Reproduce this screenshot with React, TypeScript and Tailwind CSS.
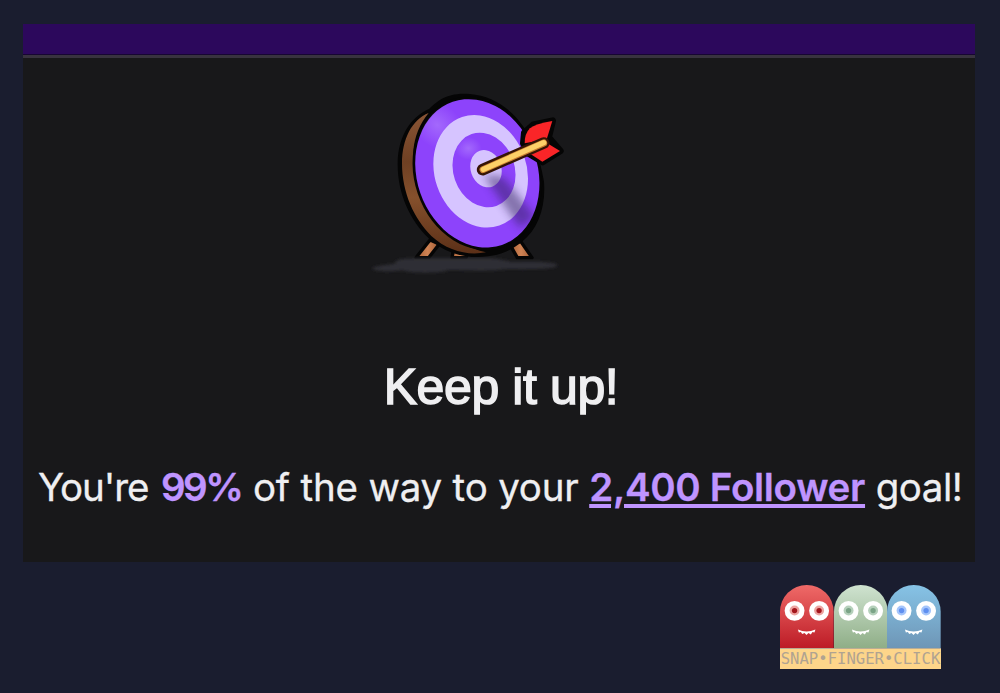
const FACES = [
  { id: "snap", from: "#ef6a68", to: "#bd1c26", iris: "#eda3a0", pupil: "#a3161d" },
  { id: "finger", from: "#cfe3d0", to: "#8fae87", iris: "#b5d0bb", pupil: "#7ba487" },
  { id: "click", from: "#86c3e6", to: "#6e96b6", iris: "#a4c5fb", pupil: "#5f8ff0" },
];

function TargetArt() {
  return (
    <svg viewBox="0 0 660 600" className="block h-[200px] w-[220px]" aria-hidden="true">
      <defs>
        <linearGradient id="wood" x1="0" y1="0" x2="0" y2="1">
          <stop offset="0" stopColor="#8a5535" />
          <stop offset="0.35" stopColor="#6f4023" />
          <stop offset="0.6" stopColor="#85502c" />
          <stop offset="1" stopColor="#5c3018" />
        </linearGradient>
        <linearGradient id="leg" x1="0" y1="0" x2="1" y2="0">
          <stop offset="0" stopColor="#a85f35" />
          <stop offset="0.5" stopColor="#cf8354" />
          <stop offset="1" stopColor="#a05a33" />
        </linearGradient>
        <radialGradient id="shine">
          <stop offset="0" stopColor="#c4a0ff" stopOpacity="0.4" />
          <stop offset="1" stopColor="#c4a0ff" stopOpacity="0" />
        </radialGradient>
        <filter id="soft" x="-30%" y="-30%" width="160%" height="160%">
          <feGaussianBlur stdDeviation="12" />
        </filter>
        <filter id="edge">
          <feGaussianBlur stdDeviation="4" />
        </filter>
        <clipPath id="disc">
          <ellipse cx="352" cy="280" rx="182" ry="228" transform="rotate(-19 352 280)" />
        </clipPath>
      </defs>

      {/* stand */}
      <g stroke="#050505" strokeWidth="10" strokeLinejoin="round">
        <path d="M210 480 L238 492 L206 533 L168 533 Z" fill="url(#leg)" />
        <path d="M280 512 L322 522 L318 533 L276 533 Z" fill="url(#leg)" />
        <path d="M450 494 L482 484 L516 533 L472 533 Z" fill="url(#leg)" />
      </g>
      <path
        d="M36 564 C60 554 90 556 108 549 C100 536 150 534 210 535 L390 535 C425 536 430 546 480 545 C530 544 590 547 592 556 C590 568 520 568 440 567 C380 576 320 570 265 570 C240 581 150 580 128 571 C90 576 40 574 36 564 Z"
        fill="#2f2e34"
        filter="url(#edge)"
      />

      {/* wooden side */}
      <path
        d="M330 42 C260 36 230 65 208 86 C150 112 114 170 113 250 C112 340 150 420 205 474 C252 520 320 538 385 529 C430 523 462 505 485 486 C535 448 558 380 552 305 C542 235 510 165 484 132 C445 78 390 47 330 42 Z"
        fill="#050505"
      />
      <path
        d="M206 99 C156 118 126 178 126 250 C126 338 162 416 214 468 C262 512 322 528 378 517 C330 506 270 480 228 432 C180 374 156 290 160 215 C163 170 180 130 206 99 Z"
        fill="url(#wood)"
      />

      {/* rings */}
      <ellipse cx="352" cy="280" rx="189" ry="235" fill="#050505" transform="rotate(-19 352 280)" />
      <ellipse cx="352" cy="280" rx="181" ry="227" fill="#8d43fb" transform="rotate(-19 352 280)" />
      <g clipPath="url(#disc)">
        <ellipse cx="232" cy="135" rx="85" ry="65" fill="url(#shine)" transform="rotate(40 232 135)" />
        <ellipse cx="362" cy="274" rx="138" ry="172" fill="#d6c4ff" transform="rotate(-19 362 274)" />
        <ellipse cx="372" cy="270" rx="92" ry="114" fill="#8d43fb" transform="rotate(-19 372 270)" />
        <ellipse cx="325" cy="205" rx="40" ry="34" fill="url(#shine)" />
        <ellipse cx="378" cy="266" rx="46" ry="57" fill="#d6c4ff" transform="rotate(-19 378 266)" />
        <path d="M370 284 L430 290 L525 410 L480 445 Z" fill="#30215c" opacity="0.5" filter="url(#soft)" />
      </g>

      {/* arrow */}
      <path d="M493 158 L520 134 L578 122 L566 172 L601 213 L548 246 L508 222 L490 190 Z" fill="#050505" stroke="#050505" strokeWidth="20" strokeLinejoin="round" />
      <path d="M494 190 Q494 160 510 145 Q525 132 577 123 L560 178 Z" fill="#fa2528" />
      <path d="M508 220 L562 190 L600 213 L547 245 Z" fill="#fa2528" />
      <path d="M368 269 L551 189" stroke="#351405" strokeWidth="35" strokeLinecap="round" />
      <path d="M369 269 L551 189" stroke="#ca8030" strokeWidth="21" strokeLinecap="round" />
      <path d="M370 268 L551 188" stroke="#fdd068" strokeWidth="16" strokeLinecap="round" />
    </svg>
  );
}

function Face({ id, from, to, iris, pupil }: (typeof FACES)[number]) {
  return (
    <svg viewBox="0 0 162 190" className="block h-[63px] flex-1" preserveAspectRatio="none" aria-hidden="true">
      <defs>
        <linearGradient id={id} x1="0" y1="0" x2="0" y2="1">
          <stop offset="0" stopColor={from} />
          <stop offset="1" stopColor={to} />
        </linearGradient>
      </defs>
      <path d="M0 190 V81 A81 81 0 0 1 162 81 V190 Z" fill={`url(#${id})`} />
      {[44, 118].map((cx) => (
        <g key={cx}>
          <circle cx={cx} cy="78" r="30" fill="#ffffff" />
          <circle cx={cx} cy="77" r="15" fill={iris} />
          <circle cx={cx} cy="77" r="8" fill={pupil} />
        </g>
      ))}
      <path
        d="M54 134 Q80 147 107 134 L104 143 L98 142 L93 149 L86 145 L80 151 L74 145 L67 148 L63 142 L57 143 Z"
        fill="#ffffff"
      />
    </svg>
  );
}

export default function App() {
  return (
    <div className="flex h-[693px] w-[1000px] flex-col overflow-hidden bg-[#1a1d2f] pt-6 pl-[23px]">
      <main className="flex h-[538px] w-[952px] shrink-0 flex-col bg-[#18181a]">
        <div className="h-[31px] border-b border-[#170632] bg-[#2c085c]" />
        <div className="h-[2.5px] bg-[#38333f]" />
        <div className="mt-[22.5px] ml-[337px]">
          <TargetArt />
        </div>
        <h1 className="mt-[78px] pl-1 text-center font-['Liberation_Sans',sans-serif] text-[50px] leading-[58px] tracking-[-0.4px] text-[#efeff1] [-webkit-text-stroke:1.5px_#efeff1]">
          Keep it up!
        </h1>
        <p className="mt-[47px] ml-[15px] font-['Inter',sans-serif] text-[38.5px] leading-[48px] tracking-[-0.2px] whitespace-nowrap text-[#efeff1] [-webkit-text-stroke:0.3px]">
          <span className="mr-0.5 tracking-[-1.1px]">You're</span>{" "}
          <span className="mr-px font-semibold tracking-[-2.5px] text-[#bf94ff]">99%</span> of the way to your{" "}
          <a className="font-semibold tracking-[-0.3px] text-[#bf94ff] underline decoration-[3.5px] underline-offset-[3px]">
            2,400 Follower
          </a>{" "}
          <span className="tracking-[-0.5px]">goal!</span>
        </p>
      </main>
      <footer className="mt-[23px] ml-[757px] w-[161px]">
        <div className="flex">
          {FACES.map((face) => (
            <Face key={face.id} {...face} />
          ))}
        </div>
        <div className="flex h-[21px] items-center justify-center border-t border-[#b9ac94] bg-[#fdd58a] pt-0.5 font-['DejaVu_Sans_Mono',monospace] text-[15.6px] leading-none whitespace-nowrap text-[#b0a391]">
          SNAP•FINGER•CLICK
        </div>
      </footer>
    </div>
  );
}
